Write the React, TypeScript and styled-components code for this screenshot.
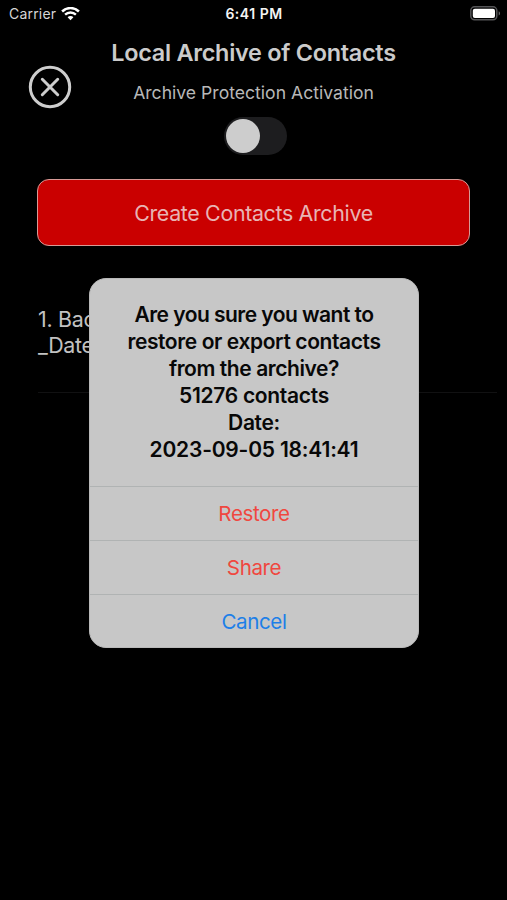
import React from "react";
import styled, { createGlobalStyle } from "styled-components";

const GlobalStyle = createGlobalStyle`
  * { box-sizing: border-box; }
  body { margin: 0; background: #000; }
  button { font: inherit; letter-spacing: inherit; padding: 0; border: 0; background: none; cursor: pointer; }
`;

const Screen = styled.main`
  position: relative;
  width: 507px;
  height: 900px;
  overflow: hidden;
  background: #000;
  color: #cbcbcb;
  font-family: Inter, "Liberation Sans", sans-serif;
`;

const StatusBar = styled.header`
  display: grid;
  grid-template-columns: 1fr auto 1fr;
  align-items: center;
  height: 27px;
  padding: 0 6px 0 9px;
`;

const Carrier = styled.div`
  display: flex;
  align-items: center;
  gap: 5px;
  color: #d6d6d6;
  font-size: 14px;
  letter-spacing: 0.2px;
`;

const Clock = styled.time`
  margin-right: 2px;
  color: #f4f4f4;
  font-size: 14px;
  font-weight: 600;
  letter-spacing: 0.5px;
`;

const BatterySlot = styled.div`
  display: flex;
  justify-content: flex-end;
`;

const Heading = styled.section`
  display: grid;
  grid-template-columns: 72px 1fr 72px;
  height: 152px;
`;

const CloseButton = styled.button`
  width: 44px;
  height: 44px;
  margin: 38px 0 0 28px;
  svg { display: block; }
`;

const HeadingText = styled.div`
  display: flex;
  flex-direction: column;
  align-items: center;
  padding-top: 11px;
  white-space: nowrap;
`;

const Title = styled.h1`
  margin: 0;
  font-size: 23.4px;
  line-height: 30px;
  font-weight: 600;
  letter-spacing: -0.26px;
`;

const Subtitle = styled.p`
  margin: 13px 0 0;
  color: #b8b8b8;
  font-size: 17.6px;
  line-height: 24px;
`;

const Toggle = styled.button`
  width: 63px;
  height: 38px;
  margin: 12px 0 0 3px;
  padding: 2px;
  border-radius: 19px;
  background: #1d1d1f;
`;

const Knob = styled.span`
  display: block;
  width: 34px;
  height: 34px;
  border-radius: 50%;
  background: #cdcdcd;
`;

const CreateButton = styled.button`
  display: block;
  width: 433px;
  height: 67px;
  margin: 0 0 1px 37px;
  border: 1px solid #d79a96;
  border-radius: 12px;
  background: #ca0000;
  color: #e8b4b4;
  font-size: 21.4px;
  letter-spacing: -0.34px;
`;

const ArchiveRow = styled.article`
  width: 459px;
  height: 146px;
  margin-left: 38px;
  padding-top: 59px;
  border-bottom: 1px solid #111112;
  color: #c2c2c2;
  font-size: 21.4px;
  line-height: 26px;
  letter-spacing: -0.3px;
`;

const RowLine = styled.div``;

const Alert = styled.section`
  position: absolute;
  top: 278px;
  left: 89px;
  width: 330px;
  height: 370px;
  border-radius: 17px;
  overflow: hidden;
  border: 1px solid #b9b9b9;
  background: #c7c7c7;
  color: #080808;
`;

const AlertMessage = styled.h2`
  display: flex;
  flex-direction: column;
  align-items: center;
  height: 207px;
  margin: 0;
  padding-top: 22px;
  font-size: 21px;
  line-height: 27px;
  font-weight: 600;
  white-space: nowrap;
`;

const MessageLine = styled.span<{ $tracking: number }>`
  letter-spacing: ${({ $tracking }) => $tracking}px;
`;

const AlertAction = styled.button<{ $tone: "danger" | "default" }>`
  display: block;
  width: 100%;
  height: 54px;
  border-top: 1px solid #b0b3b3;
  color: ${({ $tone }) => ($tone === "danger" ? "#f0473f" : "#1d7fe8")};
  font-size: 20.6px;
  letter-spacing: -0.4px;
`;

const message = [
  { text: "Are you sure you want to", tracking: -0.54 },
  { text: "restore or export contacts", tracking: -0.4 },
  { text: "from the archive?", tracking: -0.42 },
  { text: "51276 contacts", tracking: -0.3 },
  { text: "Date:", tracking: -0.35 },
  { text: "2023-09-05 18:41:41", tracking: -0.2 },
];

const WifiIcon = () => (
  <svg width="19" height="14" viewBox="0 0 19 14" fill="none" stroke="#fff">
    <path d="M1.1 4.5C5.8-.1 13.2-.1 17.9 4.5" strokeWidth="2.5" />
    <path d="M4.1 7.7C7.1 4.8 11.9 4.8 14.9 7.7" strokeWidth="2.4" />
    <path d="M6.6 10.3C8.2 8.7 10.8 8.7 12.4 10.3L9.5 13.2Z" fill="#fff" stroke="none" />
  </svg>
);

const BatteryIcon = () => (
  <svg width="31" height="15" viewBox="0 0 31 15">
    <rect x=".8" y=".8" width="26" height="13" rx="3.8" fill="#000" stroke="#555557" strokeWidth="1.5" />
    <rect x="2.8" y="2.7" width="22.2" height="9.3" rx="2" fill="#fff" />
    <path d="M28.7 5.2C30.5 5.9 30.5 8.8 28.7 9.5Z" fill="#666668" />
  </svg>
);

const CloseIcon = () => (
  <svg width="44" height="44" viewBox="0 0 44 44" fill="none" stroke="#cecece" strokeLinecap="round">
    <circle cx="22" cy="22" r="19.7" strokeWidth="3" />
    <path d="M14.3 14.3 29.7 29.7M29.7 14.3 14.3 29.7" strokeWidth="3" />
  </svg>
);

export default function App() {
  return (
    <Screen>
      <GlobalStyle />
      <StatusBar>
        <Carrier>Carrier <WifiIcon /></Carrier>
        <Clock>6:41 PM</Clock>
        <BatterySlot><BatteryIcon /></BatterySlot>
      </StatusBar>
      <Heading>
        <CloseButton aria-label="Close"><CloseIcon /></CloseButton>
        <HeadingText>
          <Title>Local Archive of Contacts</Title>
          <Subtitle>Archive Protection Activation</Subtitle>
          <Toggle role="switch" aria-checked={false} aria-label="Archive protection"><Knob /></Toggle>
        </HeadingText>
      </Heading>
      <CreateButton>Create Contacts Archive</CreateButton>
      <ArchiveRow>
        <RowLine>1. Backup</RowLine>
        <RowLine>_Date:</RowLine>
      </ArchiveRow>
      <Alert role="alertdialog">
        <AlertMessage>
          {message.map((line) => (
            <MessageLine key={line.text} $tracking={line.tracking}>{line.text}</MessageLine>
          ))}
        </AlertMessage>
        <AlertAction $tone="danger">Restore</AlertAction>
        <AlertAction $tone="danger">Share</AlertAction>
        <AlertAction $tone="default">Cancel</AlertAction>
      </Alert>
    </Screen>
  );
}
